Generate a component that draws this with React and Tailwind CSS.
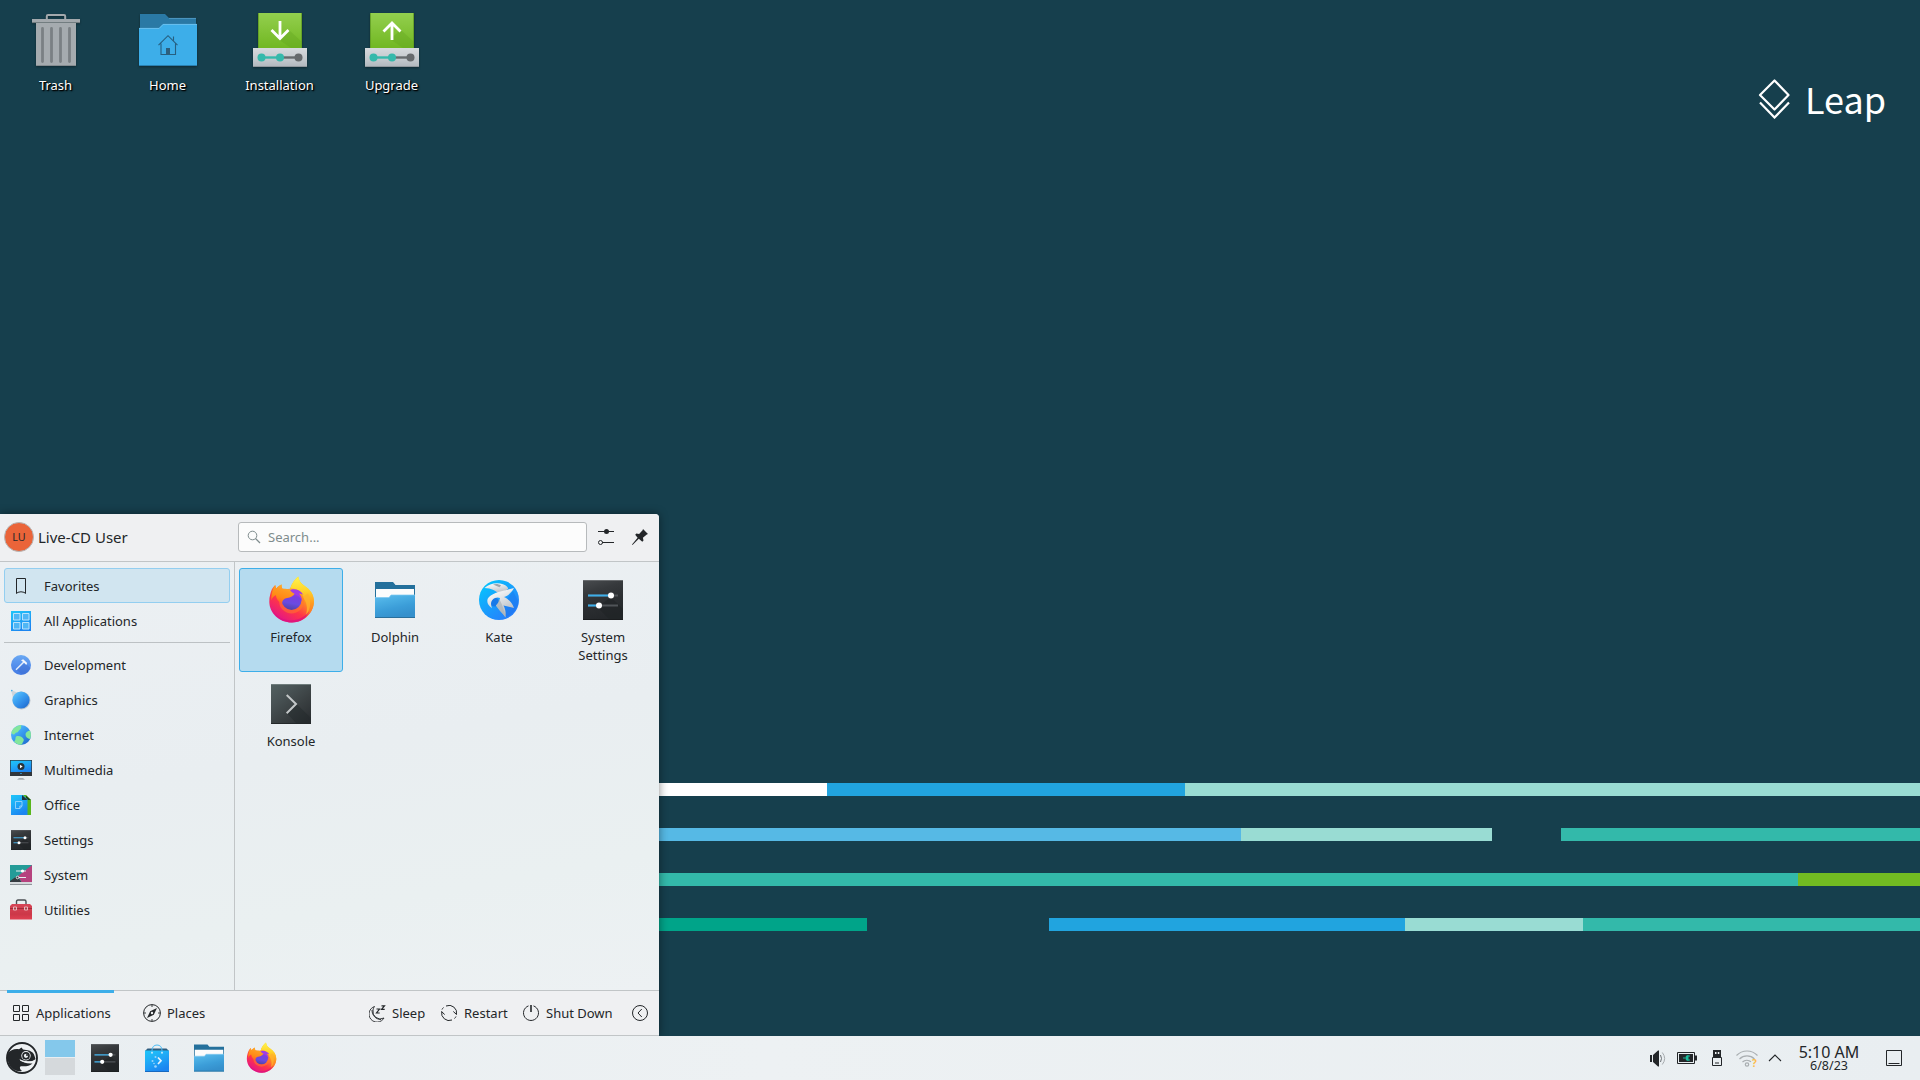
import React from "react";

function Svg({ w, h, vb, className = "", children }) {
  return (
    <svg width={w} height={h ?? w} viewBox={vb ?? `0 0 ${w} ${h ?? w}`} fill="none" className={`block shrink-0 ${className}`}>
      {children}
    </svg>
  );
}

function Defs() {
  const grads = [
    ["ffBody", "#ffe226", "#ff9a1f", "#ff3647", "#e31587", 0.8, 0.1, 0.25, 0.95],
    ["ffRight", "#fff44f", "#ffd52b", "#ff9a1f", "#ff6a2a", 0.5, 0, 0.5, 1],
    ["ffFox", "#ffb52a", "#ff9a20", "#ff8a16", "#ff5b2a", 0.7, 0, 0.3, 1],
    ["ffGlobe", "#b833e1", "#7a3fe0", "#6a4be0", "#4f43a5", 0.6, 0, 0.4, 1],
    ["folderFront", "#62bdee", "#4aaee3", "#3b9dd8", "#3590cc", 0, 0, 0.4, 1],
    ["kateBg", "#00cdfe", "#10b0fd", "#1d94fc", "#2a7cfb", 0, 0, 0.8, 1],
    ["kateBird", "#fcfcfc", "#eceef0", "#d2d6da", "#b4babf", 0, 0, 0.4, 1],
    ["darkTile", "#4a4d50", "#36393c", "#2b2e31", "#25282b", 0, 0, 0.3, 1],
    ["konTile", "#536161", "#485254", "#3a4042", "#2b2f32", 0, 0, 0.8, 1],
    ["green", "#93cf4e", "#88c73f", "#7cbf30", "#70b722", 0, 0, 0, 1],
    ["drive", "#d6dade", "#ccd0d4", "#c0c6cb", "#b0b7bd", 0, 0, 0, 1],
    ["blueTile", "#1ec5f9", "#1fb4f7", "#1e9ef5", "#1c85f0", 0, 0, 0.5, 1],
    ["sphere", "#5fc3fb", "#3ea4f3", "#2d86e4", "#1c66c8", 0.1, 0.1, 0.9, 1],
    ["dev", "#6aa9f3", "#5c98ef", "#4f89ea", "#437ae3", 0, 0, 0, 1],
    ["red", "#d64556", "#d23f50", "#cc3848", "#e04152", 0, 0, 0, 1],
  ];
  return (
    <svg width="0" height="0" className="absolute">
      <defs>
        {grads.map(([id, a, b, c, d, x1, y1, x2, y2]) => (
          <linearGradient key={id} id={id} x1={x1} y1={y1} x2={x2} y2={y2}>
            <stop offset="0" stopColor={a} />
            <stop offset="0.33" stopColor={b} />
            <stop offset="0.66" stopColor={c} />
            <stop offset="1" stopColor={d} />
          </linearGradient>
        ))}
      </defs>
    </svg>
  );
}

function Firefox({ size }) {
  return (
    <Svg w={size} vb="6 5.5 47 47" className="-mt-[2px]">
      <path d="M8.2 24c.8-4 2.400-7.200 5-9.500.3 1.600.6 2.600 1.200 3.600 1.200-1.700 3-3.200 5.200-4.100-.2 1.700.1 3 .8 4.300l7.600.8c1.500-6 5-10.500 8.300-13 .5 4 2.700 6.800 5.800 8.800 6.400 4.300 9.800 9.300 9.800 15.900 0 11.400-9.600 21-21.800 21.200C17.500 52.200 7.600 43 7.300 31.500c-.1-2.700.2-5.200.9-7.500z" fill="url(#ffBody)" />
      <path d="M28 19c1.500-6 5-10.300 8.300-12.800.5 4 2.700 6.800 5.800 8.800 6.400 4.300 9.800 9.300 9.800 15.900 0 6.500-3.500 12.500-8.500 16 2.500-5 2.300-11-.5-16.900-2-4.500-8-9.800-14.900-11z" fill="url(#ffRight)" />
      <path d="M46 23c3.500 7 3 15-2 21.500 1.800-7 1-13-3-18z" fill="#ffb22e" opacity=".75" />
      <circle cx="29.500" cy="30.500" r="12.500" fill="#ff7a2a" opacity=".55" />
      <circle cx="29.600" cy="29.500" r="9.900" fill="url(#ffGlobe)" />
      <path d="M29 19.200c4.500-1.200 9.500.6 12.300 5-2.300-1.100-3.700-1.200-5-.8 2.500 1.500 4 4.300 3.800 7.600-1-3.800-4.200-6.600-8.500-7.300z" fill="#a13ce6" />
      <path d="M13.200 14.500c.3 1.600.6 2.600 1.200 3.600 1.200-1.700 3-3.200 5.200-4.100-.2 1.700.1 3 .8 4.300 2.600-.3 5.300.2 7.600 1.300 1.100 1.600 2.300 2.800 4.600 3.700-2.200 3.400-5.300 3.800-8.700 4.500-2.400 1-3.700 2.600-4 5.300-3.600-1.500-5.700-4.900-6-8.500-2.100 1-3.900 3-4.800 5.500.1-6.100 1.400-11.800 4.100-15.600z" fill="url(#ffFox)" />
      <path d="M10 38c4 8.500 12 12.200 20 11.800 7-.3 13-3.300 17.500-9-3.500 7.500-9.800 11.200-17.400 11.300C21 52 13 47 10 38z" fill="#dc1280" opacity=".75" />
    </Svg>
  );
}

function Folder({ w, h }) {
  return (
    <Svg w={w} h={h} vb="0 0 40 36">
      <path d="M0 0h18l2.500 3H40v30H0z" fill="#24709c" />
      <path d="M1 7h38v12H1z" fill="#fcfcfc" />
      <path d="M0 15.500h14l2-2.500h24v23H0z" fill="url(#folderFront)" />
      <path d="M0 15.500h14l2-2.500h24" stroke="#7cc8f0" strokeWidth=".7" />
      <path d="M0 35.500h40" stroke="#2a6f9b" />
    </Svg>
  );
}

function SettingsTile({ size }) {
  return (
    <Svg w={size} vb="0 0 40 40">
      <path d="M0 0h40v40H0z" fill="url(#darkTile)" />
      <path d="M28 17.500L40 29v11H27L14 27z" fill="#1e2124" opacity=".5" />
      <path d="M0 .5h40" stroke="#686b6e" />
      <path d="M0 39.500h40" stroke="#1a1c1e" />
      <path d="M5 15.500h30M5 25.500h30" stroke="#505458" strokeWidth="1.800" />
      <path d="M5 15.500h23M5 25.500h11" stroke="#3daee9" strokeWidth="1.800" />
      <circle cx="28" cy="15.500" r="3" fill="#fff" />
      <circle cx="16" cy="25.500" r="3" fill="#fff" />
    </Svg>
  );
}

function Kate() {
  return (
    <Svg w={40}>
      <circle cx="20" cy="20" r="20" fill="url(#kateBg)" />
      <path d="M24 25l3 12c6-2 11-8 12.500-15L34 11z" fill="#1766e0" opacity=".3" />
      <path d="M5.500 8C10 3.500 18 2 24 4.200c3.500 1.200 5.200 3 5.200 5L20 14.500C18 11 12 8 5.500 8z" fill="url(#kateBird)" />
      <path d="M14 4.600c3-1 6-.5 8 1l-1.500 1.600z" fill="#9aa4ac" />
      <path d="M21 13.500c3-1.200 6-2.500 8.200-4.300" stroke="#1b8ff0" strokeWidth=".8" />
      <circle cx="15.500" cy="22" r="4.500" fill="#1879e8" />
      <path d="M35 8c-7 2-20 4-25 9-3 3-2 8 3 11.200C11 23 12 20 16 18c2-1 4-.6 5 0-.5 3-1.500 5-4 7.500 2.500 4 6 7 9.500 12 .3-5 .5-7-2-12L35 28c-2-6-6-9-10-11 4-1 8-5 10-9z" fill="url(#kateBird)" />
      <path d="M20 19c-.5 3-1 4.500-3 6.500 2 3.500 6 7 9.500 11.500-1-4-2.500-12-6.500-18z" fill="#aab2b8" opacity=".7" />
    </Svg>
  );
}

function Konsole() {
  return (
    <Svg w={40}>
      <path d="M0 0h40v40H0z" fill="url(#konTile)" />
      <path d="M25.500 20L40 34v6H26L16 29.500z" fill="#22272a" opacity=".45" />
      <path d="M0 .5h40" stroke="#6f7c7c" />
      <path d="M0 39.500h40" stroke="#24282a" />
      <path d="M15.700 11l9.300 9-9.300 9.300" stroke="#c3c7c8" strokeWidth="2" />
    </Svg>
  );
}

function Trash() {
  return (
    <Svg w={48} h={52} className="mb-px">
      <path d="M14.800 5V2.200q0-1.200 1.200-1.200h16q1.200 0 1.200 1.200V5" stroke="#a3a9ad" strokeWidth="2" />
      <path d="M0 5h48v3.600H0z" fill="#a3a9ad" />
      <path d="M0 8.600h48" stroke="#7c8488" strokeWidth=".8" />
      <path d="M4 9h40v43H4z" fill="#a5abaf" />
      <path d="M4 51.500h40" stroke="#858c90" />
      <path d="M10.500 14.500v33M19.500 14.500v33M28.500 14.500v33M37.500 14.500v33" stroke="#7a8084" strokeWidth="2.800" strokeLinecap="round" />
    </Svg>
  );
}

function HomeFolder() {
  return (
    <Svg w={58} h={52} className="mb-px">
      <path d="M1 0h25l4 4h27v20H1z" fill="#2a79a5" />
      <path d="M30 4.400h27" stroke="#58a0c8" strokeWidth=".8" />
      <path d="M0 14h20l4-4h34v42H0z" fill="#3daee9" />
      <path d="M0 14.400h20.200l4-4H58" stroke="#76c5f0" strokeWidth=".8" />
      <path d="M0 51.500h58" stroke="#2a80b0" />
      <path d="M19.500 31.200L29 21.700l9.500 9.500M22 29.500v11h14.500v-11M34.500 26.500v-4" stroke="#275f80" strokeWidth="1.100" />
      <path d="M27 34h4v7h-4z" fill="#2c5f7d" />
    </Svg>
  );
}

function DriveIcon({ up }) {
  return (
    <Svg w={54} h={54}>
      <path d="M5 0h44v36H5z" fill="url(#green)" />
      <path d="M5.500 0v36M48.500 0v36" stroke="#5f9a25" strokeWidth=".8" />
      <path d="M36 17l13 12v6H38L25 26z" fill="#5e9e1e" opacity=".3" />
      <path d={up ? "M27 27V11M18.500 18.500L27 10l8.500 8.500" : "M27 8v17M18.500 17l8.500 8.500 8.500-8.500"} stroke="#fff" strokeWidth="2.800" />
      <path d="M0 35h54v19H0z" fill="url(#drive)" />
      <path d="M0 53.500h54" stroke="#90989e" />
      <path d="M9 44.500h18" stroke="#35b9ab" strokeWidth="2.400" />
      <path d="M27 44.500h18" stroke="#666a6d" strokeWidth="2.400" />
      <circle cx="8.500" cy="44.500" r="4" fill="#35b9ab" />
      <circle cx="27" cy="44.500" r="4" fill="#35b9ab" />
      <circle cx="45.500" cy="44.500" r="4" fill="#666a6d" />
    </Svg>
  );
}

const side = {
  Favorites: (
    <Svg w={22}>
      <path d="M6.500 3.500h9v15l-1.500-1.200a5.500 3 0 0 0-6 0l-1.500 1.200z" stroke="#232629" />
    </Svg>
  ),
  "All Applications": (
    <Svg w={22}>
      <path d="M1 1h20v20H1z" fill="url(#blueTile)" />
      <path d="M3.500 3.500h6.500v6.500H3.500zM12.500 3.500H19v6.500h-6.500zM3.500 12.500h6.500V19H3.500zM12.500 12.500H19V19h-6.500z" fill="#4fb6f5" stroke="#b9e3fc" strokeWidth="1" />
    </Svg>
  ),
  Development: (
    <Svg w={22}>
      <circle cx="11" cy="11" r="10" fill="url(#dev)" />
      <path d="M15 9l5.500 5c-1.200 3.500-4 6-7.500 6.800L6.500 16z" fill="#3663c6" opacity=".35" />
      <path d="M6 15.800l8-8" stroke="#e5eefb" strokeWidth="1.500" />
      <path d="M11 6.200l2.200-.9 4 3.800-.9 1.800-2.300-2.200z" fill="#f2f6fc" />
    </Svg>
  ),
  Graphics: (
    <Svg w={22}>
      <path d="M1 1l5 2 13 5-9 12-7-11z" fill="#cfd5da" />
      <circle cx="11.500" cy="11.500" r="9" fill="#bcc6ce" />
      <circle cx="11" cy="11" r="8.600" fill="url(#sphere)" />
      <circle cx="1.800" cy="1.600" r=".8" fill="#3daee9" />
    </Svg>
  ),
  Internet: (
    <Svg w={22}>
      <circle cx="11" cy="11" r="10" fill="url(#sphere)" />
      <path d="M1.300 9C2 5 6 1.500 11.500 1c-1 2 .5 3-1.500 4.500-2 1-1.500 3-3.500 3C4.500 9 5 11 3.500 10.500zM20 6.500c1.300 2.500 1.300 6 0 8.500-2.500-.5-4.500-2-4.500-4.500 0-2 2-3.500 4.500-4zM6 12.500c3-1 6 0 7.500 2.500 1 2-1 3-1.500 5.500-3.500.5-6-.5-8-3 2-1 1-3.500 2-5z" fill="#83e69c" />
    </Svg>
  ),
  Multimedia: (
    <Svg w={22}>
      <path d="M0 1h22v16H0z" fill="#31363b" />
      <path d="M.7 1.700h20.600v11.300H.7z" fill="url(#blueTile)" />
      <circle cx="11" cy="7.500" r="3.500" fill="#2a3338" />
      <path d="M10 5.800v3.400l2.700-1.700z" fill="#fff" />
      <path d="M10.300 14.500h1.400" stroke="#3daee9" />
      <path d="M9 19h4l2 1.700H7z" fill="#aab0b5" />
    </Svg>
  ),
  Office: (
    <Svg w={22}>
      <path d="M9 1h7l5 5v15H9z" fill="#58b61c" />
      <path d="M16 1.500L21 6h-5z" fill="#1f4516" />
      <path d="M1 1h12l4.500 4.500V21H1z" fill="url(#blueTile)" />
      <path d="M12 1l5.500 5H12z" fill="#20333a" />
      <path d="M5.500 7.500h6.500v4.500l-2 2.500H5.500zM12 12H9.800v2.500" stroke="#98d5fa" strokeWidth=".9" />
    </Svg>
  ),
  Settings: <SettingsTile size={20} />,
  System: (
    <Svg w={22}>
      <path d="M0 1h22v18H0z" fill="#249c98" />
      <path d="M22 1v18H12l-4-7z" fill="#b6427e" />
      <path d="M0 17l7-5 5 7H0z" fill="#353b40" />
      <path d="M0 18h22v3H0z" fill="#d5d9dc" />
      <path d="M0 20.500h22" stroke="#8e959a" />
      <path d="M6 7h10M8 13.500h8" stroke="#e6eef0" />
      <circle cx="12.500" cy="7" r="1.600" fill="#fff" />
      <circle cx="7.500" cy="13.500" r="1.300" stroke="#fff" fill="#353b40" strokeWidth=".8" />
    </Svg>
  ),
  Utilities: (
    <Svg w={22}>
      <path d="M6.500 5V2.500q0-1.500 1.500-1.500h6.500q1.500 0 1.500 1.500V5" stroke="#4b4f53" strokeWidth="1.400" />
      <path d="M2 5h18l2 2v13.500H0V7z" fill="url(#red)" />
      <path d="M0 9.500h22" stroke="#a02c3a" />
      <path d="M3.500 8h3v3h-3zM14.500 8h3v3h-3z" fill="#b33845" stroke="#eac4c8" strokeWidth=".9" />
    </Svg>
  ),
};

function SideItem({ name, active }) {
  return (
    <div className={`flex h-[35px] w-[226px] items-center rounded-[3px] border pt-px ${active ? "border-[#93cef0] bg-[#d1e5f0]" : "border-transparent"}`}>
      <div className="ml-[5px] flex w-[22px] justify-center">{side[name]}</div>
      <span className="ml-3 pt-[2px]">{name}</span>
    </div>
  );
}

function AppCell({ icon, label, active }) {
  return (
    <div className={`flex h-[104px] w-[104px] flex-col items-center rounded-[3px] border pt-[7px] ${active ? "border-[#3daee9] bg-[#b5dbef]" : "border-transparent"}`}>
      <div className="flex h-12 w-12 items-center justify-center">{icon}</div>
      <div className="mt-1 w-[70px] text-center leading-[18px]">{label}</div>
    </div>
  );
}

function DesktopIcon({ icon, label }) {
  return (
    <div className="flex w-[112px] flex-col items-center">
      <div className="flex h-[60px] items-end justify-center drop-shadow-[0_1px_1px_rgba(0,0,0,0.35)]">{icon}</div>
      <div className="mr-px mt-[9px] leading-[18px] text-white [text-shadow:1px_1px_2px_#000,1px_1px_1px_#000]">{label}</div>
    </div>
  );
}

function Stripe({ children }) {
  return <div className="mb-8 flex h-[13px] w-full shrink-0">{children}</div>;
}

function Wallpaper() {
  return (
    <div className="absolute inset-x-0 top-[782.600px] flex flex-col">
      <Stripe>
        <div className="w-[827px] bg-white" />
        <div className="w-[358px] bg-[#21a4df]" />
        <div className="grow bg-[#99dcd3]" />
      </Stripe>
      <Stripe>
        <div className="w-[1241px] bg-[#56b9e5]" />
        <div className="w-[251px] bg-[#99dcd3]" />
        <div className="w-[68.500px]" />
        <div className="grow bg-[#33b9aa]" />
      </Stripe>
      <Stripe>
        <div className="w-[1798px] bg-[#33b9aa]" />
        <div className="grow bg-[#72bb22]" />
      </Stripe>
      <Stripe>
        <div className="w-[867px] bg-[#00a489]" />
        <div className="w-[182px]" />
        <div className="w-[355.500px] bg-[#21a4df]" />
        <div className="w-[178.500px] bg-[#99dcd3]" />
        <div className="grow bg-[#33b9aa]" />
      </Stripe>
    </div>
  );
}

function Menu() {
  return (
    <div className="absolute bottom-[44px] left-0 flex h-[522px] w-[659px] flex-col rounded-tr-[4px] bg-[#eaeff2] shadow-[0_0_10px_rgba(0,0,0,0.45)]">
      <div className="flex h-[48px] shrink-0 items-center rounded-tr-[4px] border-b border-[#c1c5c7] bg-[#eff0f2] pb-px">
        <div className="ml-1 flex h-[30px] w-[30px] items-center justify-center rounded-full border border-[#b4b7b9] bg-[#ea6439] text-[10.700px] text-[#232629]">LU</div>
        <span className="ml-1 w-[200px] text-[15px] leading-5">Live-CD User</span>
        <div className="flex h-[30px] w-[349px] items-center rounded-[3px] border border-[#b7babc] bg-[#fcfcfc] text-[#7f8c8d]">
          <Svg w={14} className="ml-[8px]">
            <circle cx="5.500" cy="5.500" r="4.300" stroke="#7f8c8d" />
            <path d="M8.500 8.500l4.500 4.500" stroke="#7f8c8d" strokeWidth="1.200" />
          </Svg>
          <span className="ml-[7px] pt-px">Search...</span>
        </div>
        <Svg w={16} className="ml-[11px]">
          <path d="M0 2.500h16M4 13.500h12" stroke="#232629" />
          <circle cx="8.500" cy="2.500" r="2.500" fill="#232629" />
          <circle cx="2.500" cy="13.500" r="2" stroke="#232629" />
        </Svg>
        <Svg w={16} className="ml-[18px]">
          <path d="M11 0l5 5-1.200.4-3.900 3.400.6 2.700-1.200 1.200L6.800 9.800.5 16 0 15.500 5.600 8.800 3.200 5.700l1.200-1.200 2.700.5 3.500-3.800z" fill="#232629" />
        </Svg>
      </div>
      <div className="flex min-h-0 grow bg-[linear-gradient(170deg,#ecf0f3_0%,#e9eef1_45%,#eaf0f1_75%,#edf1f3_100%)]">
        <div className="flex w-[235px] flex-col border-r border-[#c1c5c7] pl-1 pt-[6px]">
          <SideItem name="Favorites" active />
          <SideItem name="All Applications" />
          <div className="mb-1 mt-1 h-px w-[226px] shrink-0 bg-[#bcc1c4]" />
          {["Development", "Graphics", "Internet", "Multimedia", "Office", "Settings", "System", "Utilities"].map((n) => (
            <SideItem key={n} name={n} />
          ))}
        </div>
        <div className="grid grid-cols-[repeat(4,104px)] content-start pl-1 pt-[6px]">
          <AppCell icon={<Firefox size={47} />} label="Firefox" active />
          <AppCell icon={<Folder w={40} h={36} />} label="Dolphin" />
          <AppCell icon={<Kate />} label="Kate" />
          <AppCell icon={<SettingsTile size={40} />} label="System Settings" />
          <AppCell icon={<Konsole />} label="Konsole" />
        </div>
      </div>
      <div className="flex h-[46px] shrink-0 items-center border-y border-[#c1c5c7] bg-[#eff0f2]">
        <div className="relative ml-[7px] flex h-full w-[107px] items-center">
          <div className="absolute inset-x-0 -top-px h-[3px] bg-[#3daee9]" />
          <Svg w={16} className="ml-1.5">
            <path d="M.5.500h6v6h-6zM9.500.500h6v6h-6zM.5 9.500h6v6h-6zM9.500 9.500h6v6h-6z" stroke="#232629" />
          </Svg>
          <span className="ml-[7px] pt-px">Applications</span>
        </div>
        <Svg w={18} className="ml-[29px]">
          <circle cx="9" cy="9" r="8.400" stroke="#232629" />
          <path d="M14 4L10.800 10.800 4 14l3.200-6.800z" fill="#232629" />
          <circle cx="9" cy="9" r="1.200" fill="#eff0f2" />
          <path d="M9 1v2M9 15v2M1 9h2M15 9h2" stroke="#232629" strokeWidth=".9" />
        </Svg>
        <span className="ml-[6px] w-[202px] pt-px">Places</span>
        <Svg w={17} h={17}>
          <path d="M5.500 1.500A8 8 0 1 0 15 13 7.500 7.500 0 0 1 4 5c.1-1.300.6-2.500 1.500-3.500zM3 5c0 5.500 4 9.500 9 9.500" stroke="#232629" strokeWidth=".9" />
          <path d="M7.500 4h3L7.500 8h3.200M12.500.800h3l-3 3.500h3.200" stroke="#232629" strokeWidth="1.200" />
        </Svg>
        <span className="ml-[6px] w-[49px] pt-px">Sleep</span>
        <Svg w={16}>
          <path d="M5 1a7.600 7.600 0 0 1 10.500 8.500M11 15A7.600 7.600 0 0 1 .7 6.500" stroke="#232629" />
          <path d="M.5 6.500l3.200 3M15.500 9.500l-3.200-3" stroke="#232629" />
          <path d="M1 4.500a7.600 7.600 0 0 1 1.500-2M15 11.500a7.600 7.600 0 0 1-1.500 2" stroke="#232629" />
        </Svg>
        <span className="ml-[7px] w-[59px] pt-px">Restart</span>
        <Svg w={16}>
          <path d="M5.500.900a7.500 7.500 0 1 0 5 0" stroke="#232629" />
          <path d="M8 0v7" stroke="#232629" strokeWidth="1.600" />
        </Svg>
        <span className="ml-[7px] w-[86px] pt-px">Shut Down</span>
        <Svg w={16}>
          <circle cx="8" cy="8" r="7.500" stroke="#232629" />
          <path d="M9.800 4L6 8l3.800 4" stroke="#232629" />
        </Svg>
      </div>
    </div>
  );
}

function Geeko() {
  return (
    <Svg w={32}>
      <circle cx="16" cy="16" r="15" fill="#eef1f3" stroke="#232629" strokeWidth="1.900" />
      <path d="M2 11.500C4 8 8.500 6.500 13 7.200l2.500-1.700 1.500 2c4 .3 8.500 1.500 10 3.500 1.300 1.700 2 4 2.500 6-1.500 1.600-4 2.500-7 2.300-4 .1-7-1.300-9.500-2.500 2.500 3.400 7 5 13.500 4.700-2.500 2.700-8 3.200-11.500 2.700-2 .8-1 3 1 4.800-6 1-11-2-13-7C1.500 18.500 1 15 2 11.500z" fill="#232629" />
      <circle cx="20" cy="13.800" r="4.700" fill="#eef1f3" />
      <circle cx="20" cy="13.800" r="3" fill="#eef1f3" stroke="#232629" strokeWidth="1.700" />
      <path d="M20 13h2" stroke="#232629" strokeWidth="1.500" />
      <path d="M14 18c4 2.500 10 3 15 .6" stroke="#eef1f3" strokeWidth="1" />
    </Svg>
  );
}

function Discover() {
  return (
    <Svg w={24} h={28}>
      <path d="M2.500 4.500h19L24 7H0z" fill="#2c5d80" />
      <path d="M0 6.500h24V28H0z" fill="url(#blueTile)" />
      <path d="M0 27.500h24" stroke="#1769c0" />
      <path d="M7 8.500V6.500C7 3 9 1 12 1s5 2 5 5.500v2" stroke="#4dbdf5" strokeWidth="1" />
      <circle cx="7" cy="8.800" r="1" fill="#c4e8fb" />
      <circle cx="17" cy="8.800" r="1" fill="#c4e8fb" />
      <path d="M13 13.500l3 3.300-3 3.200" stroke="#e8f5fe" strokeWidth="1.700" />
      <circle cx="10.500" cy="13" r="1" fill="#9bd4fb" />
      <circle cx="10.500" cy="22.500" r="1.300" fill="#9bd4fb" />
      <circle cx="7.500" cy="17" r="1" fill="#9bd4fb" />
      <circle cx="9" cy="19.500" r=".8" fill="#9bd4fb" />
    </Svg>
  );
}

function Taskbar() {
  return (
    <div className="absolute inset-x-0 bottom-0 flex h-[44px] items-center bg-[linear-gradient(90deg,#e9eef1,#edf1f3_40%,#e9eef1)]">
      <div className="ml-[6px]"><Geeko /></div>
      <div className="-mt-px ml-[7px] flex w-[30px] flex-col gap-px">
        <div className="h-[17px] bg-[#84c8eb]" />
        <div className="h-[17px] bg-[#d5d9dc]" />
      </div>
      <div className="ml-4"><SettingsTile size={28} /></div>
      <div className="ml-[26px]"><Discover /></div>
      <div className="ml-[25px]"><Folder w={30} h={28} /></div>
      <div className="ml-[21.500px]"><Firefox size={31} /></div>
      <div className="grow" />
      <Svg w={17} className="mr-[10px]">
        <path d="M0 5h2v7H0zM3 5l5-4.500h1v16H8L3 12z" fill="#232629" />
        <path d="M10.500 5q2 3.500 0 7" stroke="#6b7074" />
        <path d="M12.300 2.500q4.700 6 0 12" stroke="#a6abae" />
      </Svg>
      <Svg w={20} h={12} className="mr-[15px]">
        <path d="M.5.500h17v11H.5z" stroke="#232629" />
        <path d="M2 2h14v8H2zM18 3.500h2v5h-2z" fill="#232629" />
        <path d="M6 6h2.500M13 4h-2M13 8h-2" stroke="#1abc9c" strokeWidth="1.200" />
        <path d="M11.500 3v6a3 3 0 0 1 0-6z" fill="#1abc9c" />
      </Svg>
      <Svg w={10} h={16} className="mr-[14px]">
        <path d="M1 0h8v7H1z" fill="#232629" />
        <path d="M3 2h1.500v2H3zM5.800 2h1.500v2H5.800z" fill="#eef1f3" />
        <path d="M.5 7.500h9v8h-9z" stroke="#232629" />
        <path d="M3 13h4" stroke="#232629" />
      </Svg>
      <div className="relative mr-[10px]">
        <Svg w={22} h={17}>
          <path d="M.5 5.500a14.500 14.500 0 0 1 21 0M3.500 9a10.500 10.500 0 0 1 15 0M6.500 12a6.500 6.500 0 0 1 8.500-.3" stroke="#a9aeb1" strokeWidth="1.200" />
          <circle cx="11" cy="14.500" r="1.700" stroke="#a9aeb1" strokeWidth="1.200" />
        </Svg>
        <span className="absolute left-[16px] top-[8px] text-[10px] font-bold leading-[10px] text-[#fdbc4b]">?</span>
      </div>
      <Svg w={14} h={8} className="mr-[15px]">
        <path d="M1 7l6-6 6 6" stroke="#232629" strokeWidth="1.100" />
      </Svg>
      <div className="mr-[25px] flex w-[64px] flex-col items-center whitespace-nowrap pb-px">
        <span className="text-[16px] leading-[16px]">5:10 AM</span>
        <span className="text-[12.500px] leading-[11px]">6/8/23</span>
      </div>
      <Svg w={16} className="mr-[18px]">
        <path d="M.5.500h15v15H.5zM2.500 13.500h11" stroke="#232629" />
      </Svg>
    </div>
  );
}

export default function App() {
  return (
    <div className="relative h-[1080px] w-[1920px] overflow-hidden bg-[#163f4d] font-['Noto_Sans',sans-serif] text-[13px] text-[#232629]">
      <Defs />
      <Wallpaper />
      <div className="relative flex items-start justify-between">
        <div className="flex pt-[7px]">
          <DesktopIcon icon={<Trash />} label="Trash" />
          <DesktopIcon icon={<HomeFolder />} label="Home" />
          <DesktopIcon icon={<DriveIcon />} label="Installation" />
          <DesktopIcon icon={<DriveIcon up />} label="Upgrade" />
        </div>
        <div className="mt-[72px] flex w-[162px] items-center gap-[15px] text-white">
          <Svg w={32} h={40} className="mt-[2px]">
            <path d="M16.500 1.500l14 14.500-14 14.500L2 16z" stroke="#fff" strokeWidth="2.200" strokeLinejoin="round" />
            <path d="M2 23.500L16.500 38.500 31 23.500" stroke="#fff" strokeWidth="2.200" />
          </Svg>
          <span className="font-['Noto_Sans_CJK_SC','Noto_Sans',sans-serif] text-[36px] leading-[52px]">Leap</span>
        </div>
      </div>
      <Menu />
      <Taskbar />
    </div>
  );
}
